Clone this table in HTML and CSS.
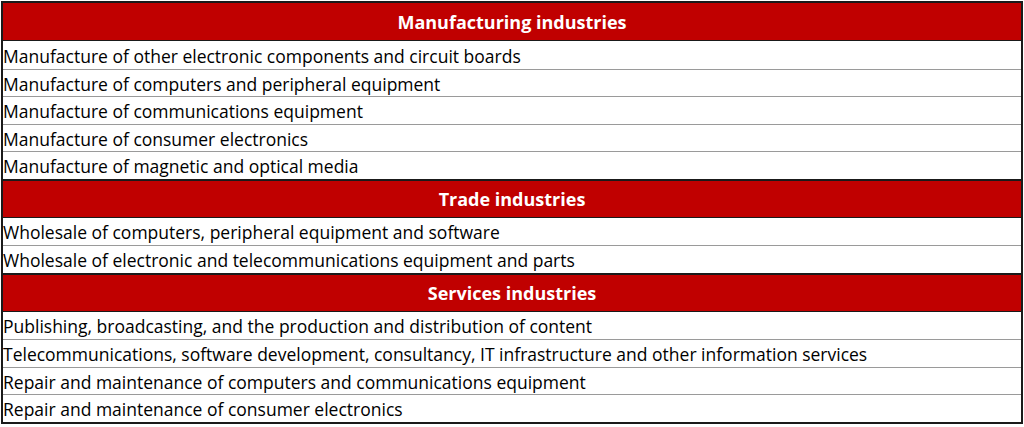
FILE: index.html
```html
<!DOCTYPE html>
<html lang="en">
<head>
<meta charset="utf-8">
<title>Industries</title>
<link rel="stylesheet" href="styles.css">
</head>
<body>
<div class="sheet">
  <div class="head first">Manufacturing industries</div>
  <div class="row">Manufacture of other electronic components and circuit boards</div>
  <div class="row">Manufacture of computers and peripheral equipment</div>
  <div class="row">Manufacture of communications equipment</div>
  <div class="row">Manufacture of consumer electronics</div>
  <div class="row">Manufacture of magnetic and optical media</div>
  <div class="head">Trade industries</div>
  <div class="row">Wholesale of computers, peripheral equipment and software</div>
  <div class="row">Wholesale of electronic and telecommunications equipment and parts</div>
  <div class="head">Services industries</div>
  <div class="row">Publishing, broadcasting, and the production and distribution of content</div>
  <div class="row">Telecommunications, software development, consultancy, IT infrastructure and other information services</div>
  <div class="row">Repair and maintenance of computers and communications equipment</div>
  <div class="row">Repair and maintenance of consumer electronics</div>
</div>
</body>
</html>
```
FILE: styles.css
```css
html, body {
  margin: 0;
  padding: 0;
  background: #ffffff;
}

.sheet {
  margin: 1px 0 0 1px;
  width: 1022px;
  box-sizing: border-box;
  border: 2px solid #1a1a1a;
  display: flex;
  flex-direction: column;
  font-family: "Open Sans", "Liberation Sans", sans-serif;
  color: #000;
}

.head {
  box-sizing: border-box;
  height: 39px;
  background: #c00000;
  color: #ffffff;
  font-weight: 700;
  font-size: 18px;
  display: flex;
  align-items: center;
  justify-content: center;
  border-top: 2px solid #1a1a1a;
  border-bottom: 1px solid #1a1a1a;
}

.head.first {
  height: 38px;
  border-top: none;
}

.row {
  box-sizing: border-box;
  height: 27.5px;
  font-size: 17.5px;
  display: flex;
  align-items: center;
  padding: 2px 0 0 0;
  white-space: nowrap;
}

.row + .row {
  border-top: 1px solid #9a9a9a;
}
```
